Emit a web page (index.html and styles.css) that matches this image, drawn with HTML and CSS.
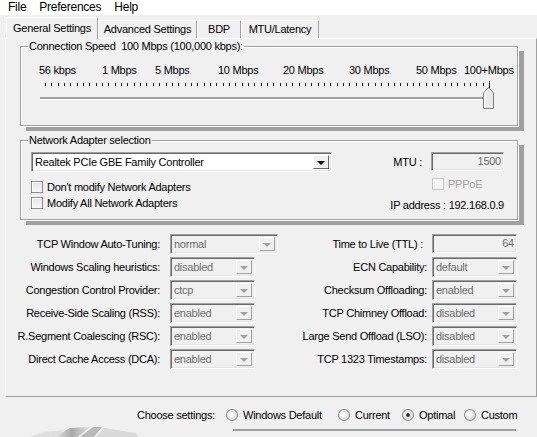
FILE: index.html
```html
<!DOCTYPE html>
<html lang="en">
<head>
  <meta charset="UTF-8" />
  <title>TCP Optimizer</title>
  <link rel="stylesheet" href="styles.css">
</head>
<body>
  <div class="menubar">
    <span>File</span>
    <span>Preferences</span>
    <span>Help</span>
  </div>

  <div class="tabs">
    <div class="tab active tab-general">General Settings</div>
    <div class="tab tab-adv">Advanced Settings</div>
    <div class="tab tab-bdp">BDP</div>
    <div class="tab tab-mtu">MTU/Latency</div>
  </div>

  <div class="panel">
    <!-- Connection speed slider -->
    <div class="group speed">
      <span class="group-title">Connection Speed&nbsp; 100 Mbps (100,000 kbps):</span>
      <div class="scale">
        <span class="scale-label" style="left:18px">56 kbps</span>
        <span class="scale-label" style="left:81px">1 Mbps</span>
        <span class="scale-label" style="left:134px">5 Mbps</span>
        <span class="scale-label" style="left:197px">10 Mbps</span>
        <span class="scale-label" style="left:262px">20 Mbps</span>
        <span class="scale-label" style="left:328px">30 Mbps</span>
        <span class="scale-label" style="left:395px">50 Mbps</span>
        <span class="scale-label" style="left:443px">100+Mbps</span>
        <div class="ticks" id="ticks"></div>
        <div class="track"></div>
        <svg class="thumb" width="12" height="22" viewBox="0 0 12 22">
          <polygon points="0.5,21.5 0.5,6 5.5,0.5 10.5,6 10.5,21.5" fill="#e9e9e9" stroke="#7d7d7d" />
          <polyline points="1.5,20.5 1.5,6.4 5.5,2" fill="none" stroke="#fff" />
        </svg>
      </div>
    </div>

    <!-- Network adapter -->
    <div class="group adapter">
      <span class="group-title">Network Adapter selection</span>
      <div class="adapter-left">
        <div class="combo wide enabled">Realtek PCIe GBE Family Controller<span class="combo-btn"></span></div>
        <div class="check-list">
          <div class="check-row"><span class="check-box"></span>Don't modify Network Adapters</div>
          <div class="check-row"><span class="check-box"></span>Modify All Network Adapters</div>
        </div>
      </div>
      <div class="adapter-right">
        <div class="mtu-row">
          <span class="mtu-label">MTU :</span>
          <div class="textbox mtu-box">1500</div>
        </div>
        <div class="check-row pppoe"><span class="check-box disabled"></span>PPPoE</div>
        <div class="ip">IP address : 192.168.0.9</div>
      </div>
    </div>

    <!-- TCP settings -->
    <div class="settings">
      <span class="set-label">TCP Window Auto-Tuning:</span>
      <div class="combo">normal<span class="combo-btn"></span></div>
      <span class="set-label right ttl">Time to Live (TTL) :</span>
      <div class="textbox">64</div>

      <span class="set-label">Windows Scaling heuristics:</span>
      <div class="combo short">disabled<span class="combo-btn"></span></div>
      <span class="set-label right">ECN Capability:</span>
      <div class="combo">default<span class="combo-btn"></span></div>

      <span class="set-label">Congestion Control Provider:</span>
      <div class="combo short">ctcp<span class="combo-btn"></span></div>
      <span class="set-label right">Checksum Offloading:</span>
      <div class="combo">enabled<span class="combo-btn"></span></div>

      <span class="set-label">Receive-Side Scaling (RSS):</span>
      <div class="combo short">enabled<span class="combo-btn"></span></div>
      <span class="set-label right">TCP Chimney Offload:</span>
      <div class="combo">disabled<span class="combo-btn"></span></div>

      <span class="set-label">R.Segment Coalescing (RSC):</span>
      <div class="combo short">enabled<span class="combo-btn"></span></div>
      <span class="set-label right">Large Send Offload (LSO):</span>
      <div class="combo">disabled<span class="combo-btn"></span></div>

      <span class="set-label">Direct Cache Access (DCA):</span>
      <div class="combo short">enabled<span class="combo-btn"></span></div>
      <span class="set-label right">TCP 1323 Timestamps:</span>
      <div class="combo">disabled<span class="combo-btn"></span></div>
    </div>
  </div>

  <div class="bottom">
    <svg class="logo" width="110" height="12" viewBox="0 0 110 12">
      <defs>
        <linearGradient id="sw" x1="0" y1="0" x2="1" y2="0">
          <stop offset="0" stop-color="#e6e6e6" />
          <stop offset="0.5" stop-color="#a9a9a9" />
          <stop offset="1" stop-color="#e4e4e4" />
        </linearGradient>
      </defs>
      <polygon points="0,12 14,7 34,5 26,12" fill="#dedede" />
      <polygon points="24,12 40,3 60,2 48,12" fill="url(#sw)" />
      <polygon points="50,12 63,2 72,2 64,12" fill="#b9b9b9" />
      <polygon points="66,12 74,3 106,8 108,12" fill="#d9d9d9" />
    </svg>
    <div class="choose-row">
      <span class="choose-label">Choose settings:</span>
      <span class="opt opt-win"><span class="radio"></span>Windows Default</span>
      <span class="opt opt-cur"><span class="radio"></span>Current</span>
      <span class="opt opt-opt"><span class="radio checked"></span>Optimal</span>
      <span class="opt"><span class="radio"></span>Custom</span>
    </div>
    <div class="bottom-line"></div>
  </div>

  <script>
    // 71 ticks spread over 444px
    const ticks = document.getElementById('ticks');
    for (let i = 0; i <= 70; i++) {
      const t = document.createElement('span');
      t.className = i === 70 ? 'tick tick-end' : 'tick';
      t.style.left = Math.round(i * 444 / 70) + 'px';
      ticks.appendChild(t);
    }
  </script>
</body>
</html>
```

FILE: styles.css
```css
* {
  box-sizing: border-box;
}

body {
  margin: 0;
  width: 537px;
  height: 437px;
  overflow: hidden;
  background: #f0f0f0;
  color: #000;
  font-family: "Liberation Sans", Arial, sans-serif;
  font-size: 11px;
  letter-spacing: -0.25px;
}

/* Menu */
.menubar {
  display: flex;
  height: 15px;
  padding-left: 8px;
  background: #fff;
  font-size: 12px;
  line-height: 14px;
}

.menubar span {
  margin-right: 13px;
}

/* Tabs */
.tabs {
  display: flex;
  align-items: flex-end;
  height: 23px;
  padding-left: 6px;
}

.tab {
  height: 18px;
  line-height: 17px;
  text-align: center;
  background: #f0f0f0;
  border-top: 1px solid #fff;
  border-left: 1px solid #fff;
  border-right: 1px solid #a0a0a0;
}

.tab.active {
  position: relative;
  z-index: 1;
  height: 22px;
  margin-bottom: -1px;
  line-height: 20px;
}

.tab-general { width: 92px; }
.tab-adv { width: 99px; }
.tab-bdp { width: 44px; }
.tab-mtu { width: 78px; }

.panel {
  margin-left: 5px;
  width: 532px;
  height: 359px;
  padding-top: 7px;
  border: 1px solid;
  border-color: #fff #a0a0a0 #a0a0a0 #fff;
}

/* Group boxes */
.group {
  position: relative;
  width: 498px;
  margin-left: 14px;
  border: 1px solid #a0a0a0;
  box-shadow: inset 1px 1px 0 #fff, 1px 1px 0 #fff, 6px 5px 0 #a0a0a0;
}

.group-title {
  position: absolute;
  top: -7px;
  left: 7px;
  padding: 0 1px;
  line-height: 13px;
  background: #f0f0f0;
  white-space: nowrap;
}

.speed {
  height: 80px;
}

.scale {
  position: relative;
  height: 100%;
}

.scale-label {
  position: absolute;
  top: 17px;
  line-height: 13px;
  white-space: nowrap;
}

.ticks {
  position: absolute;
  top: 36px;
  left: 24px;
}

.tick {
  position: absolute;
  top: 0;
  width: 1px;
  height: 3px;
  background: #1a1a1a;
}

.tick-end {
  top: -2px;
  height: 7px;
}

.track {
  position: absolute;
  top: 50px;
  left: 19px;
  width: 451px;
  height: 3px;
  background: #a0a0a0;
  border-bottom: 1px solid #fff;
}

.thumb {
  position: absolute;
  top: 40px;
  left: 462px;
}

/* Network adapter */
.adapter {
  display: flex;
  height: 80px;
  margin-top: 14px;
  padding: 11px 13px 0 10px;
}

.adapter-left {
  width: 301px;
}

.check-list {
  margin-top: 7px;
}

.check-row {
  display: flex;
  align-items: center;
  height: 16px;
  white-space: nowrap;
}

.check-box {
  width: 12px;
  height: 12px;
  margin-right: 4px;
  border: 1px solid #8e8e8e;
  background: linear-gradient(#e6e6e6, #f7f7f7);
  box-shadow: inset 1px 1px 0 #fff;
}

.check-box.disabled {
  border-color: #c4c4c4;
  background: #f4f4f4;
}

.adapter-right {
  display: flex;
  flex-direction: column;
  align-items: flex-end;
  margin-left: auto;
}

.mtu-row {
  display: flex;
  align-items: center;
  height: 19px;
}

.mtu-label {
  margin-right: 9px;
}

.mtu-box {
  width: 73px;
}

.pppoe {
  width: 72px;
  height: 12px;
  margin-top: 7px;
  color: #a0a0a0;
}

.ip {
  margin-top: 9px;
  line-height: 13px;
  white-space: nowrap;
}

/* Inputs */
.textbox {
  height: 19px;
  padding-right: 2px;
  line-height: 17px;
  text-align: right;
  color: #6d6d6d;
  border: 1px solid;
  border-color: #a0a0a0 #fff #fff #a0a0a0;
  box-shadow: inset 1px 1px 0 #696969, inset -1px -1px 0 #e3e3e3;
}

.combo {
  position: relative;
  height: 20px;
  padding-left: 3px;
  line-height: 18px;
  color: #6d6d6d;
  white-space: nowrap;
  border: 1px solid;
  border-color: #a0a0a0 #fff #fff #a0a0a0;
  box-shadow: inset 1px 1px 0 #696969, inset -1px -1px 0 #e3e3e3;
}

.combo.enabled {
  color: #000;
  background: #fff;
}

.combo.wide { width: 301px; }
.combo.short { width: 85px; }

.combo-btn {
  position: absolute;
  top: 2px;
  right: 2px;
  bottom: 2px;
  width: 16px;
  background: #f0f0f0;
  border: 1px solid;
  border-color: #fff #a0a0a0 #a0a0a0 #fff;
}

.combo-btn::after {
  content: "";
  position: absolute;
  top: 5px;
  left: 3px;
  border-left: 4px solid transparent;
  border-right: 4px solid transparent;
  border-top: 4px solid #a0a0a0;
}

.combo.enabled .combo-btn {
  border-color: #fff #696969 #696969 #fff;
}

.combo.enabled .combo-btn::after {
  border-top-color: #000;
}

/* TCP settings grid */
.settings {
  display: grid;
  grid-template-columns: 164px 108px 154px 85px;
  grid-auto-rows: 20px;
  row-gap: 3px;
  margin-top: 14px;
}

.set-label {
  padding-right: 10px;
  line-height: 20px;
  text-align: right;
  white-space: nowrap;
}

.set-label.right {
  padding-right: 5px;
}

.set-label.ttl {
  padding-right: 9px;
}

/* Bottom bar */
.bottom {
  position: relative;
  height: 40px;
  padding-top: 11px;
}

.logo {
  position: absolute;
  left: 30px;
  bottom: 0;
}

.choose-row {
  display: flex;
  align-items: center;
  height: 14px;
  padding-left: 137px;
  white-space: nowrap;
}

.choose-label { width: 89px; }
.opt { display: flex; align-items: center; }
.opt-win { width: 112px; }
.opt-cur { width: 64px; }
.opt-opt { width: 62px; }

.radio {
  position: relative;
  width: 12px;
  height: 12px;
  margin-right: 5px;
  border-radius: 50%;
  border: 1px solid #8a8a8a;
  background: radial-gradient(circle at 40% 40%, #fff, #d2d2d2);
}

.radio.checked::after {
  content: "";
  position: absolute;
  top: 3px;
  left: 3px;
  width: 4px;
  height: 4px;
  border-radius: 50%;
  background: #333;
}

.bottom-line {
  width: 283px;
  height: 2px;
  margin-top: 7px;
  margin-left: 233px;
  background: #a0a0a0;
}
```
